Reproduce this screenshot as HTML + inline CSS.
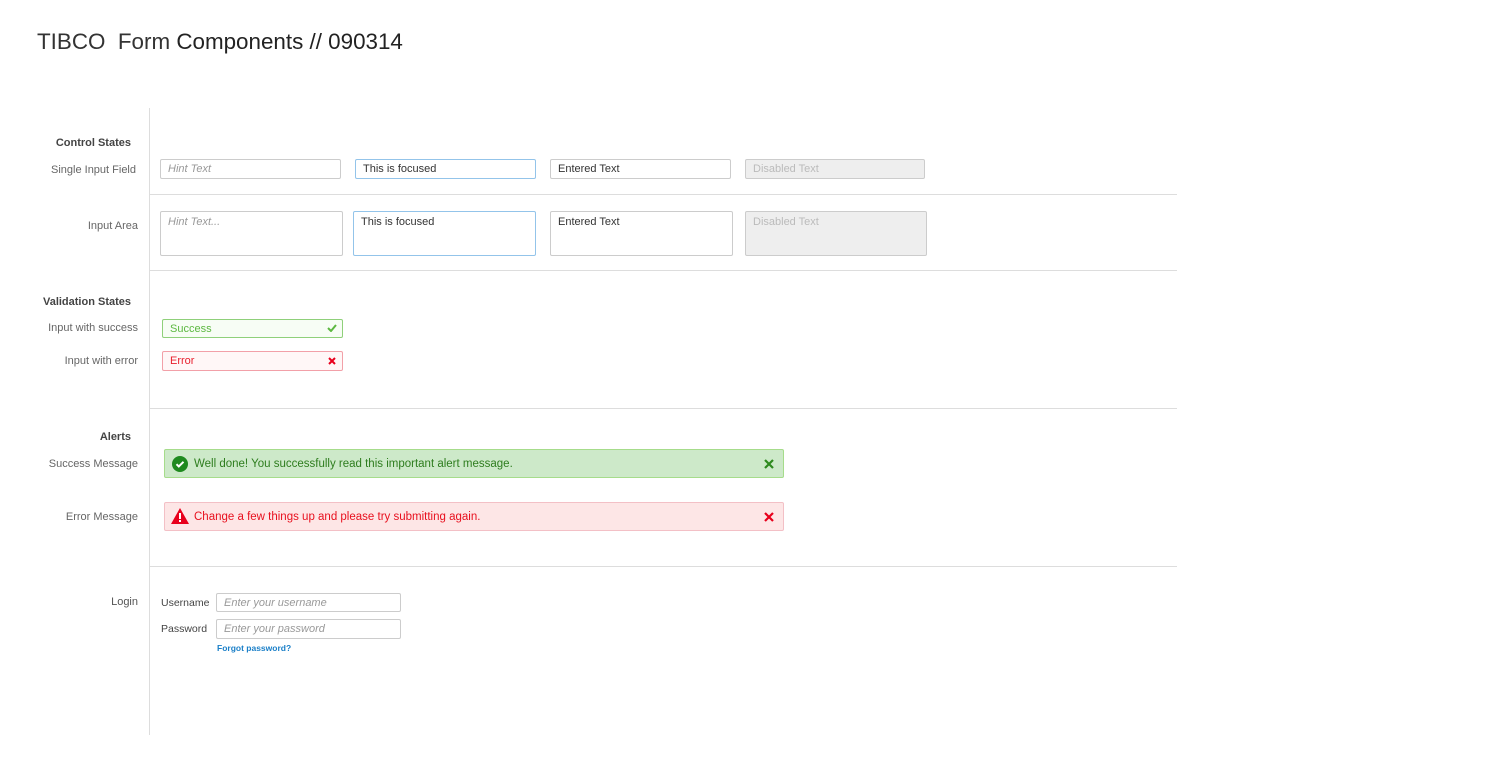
<!DOCTYPE html>
<html><head><meta charset="utf-8"><style>
body{margin:0;width:1500px;height:762px;background:#fff;position:relative;font-family:"Liberation Sans",sans-serif;overflow:hidden}
.a{position:absolute}
.t{position:absolute;font-size:22.4px;color:#222;left:37px;top:29px;white-space:nowrap}
.lbl{position:absolute;right:1362px;font-size:11px;color:#666;white-space:nowrap;text-align:right}
.h{position:absolute;right:1369px;font-size:11px;color:#444;font-weight:bold;white-space:nowrap}
.in{position:absolute;box-sizing:border-box;border:1px solid #ccc;border-radius:2px;background:#fff;color:#333;padding:2px 7px;line-height:15px;white-space:nowrap;font-family:"Liberation Sans",sans-serif;font-size:11px}
.hint{color:#999;font-style:italic}
.dis{background:#eee;color:#bbb;border-color:#ccc}
.sep{position:absolute;left:149px;width:1028px;height:1px;background:#ddd}
.al{position:absolute;left:164px;width:620px;height:29px;box-sizing:border-box;border-radius:2px;font-family:"Liberation Sans",sans-serif;font-size:11.5px;line-height:29px;padding-left:29px}
</style></head><body>
<div class="t"><span style="color:#333">TIBCO&nbsp; Form</span> Components // 090314</div>
<div class="a" style="left:149px;top:108px;width:1px;height:627px;background:#ddd"></div>
<div class="sep" style="top:194px"></div>
<div class="sep" style="top:270px"></div>
<div class="sep" style="top:408px"></div>
<div class="sep" style="top:566px"></div>

<div class="h" style="top:137px">Control States</div>
<div class="lbl" style="top:164px;right:1364px">Single Input Field</div>
<div class="in hint" style="left:160px;top:159px;width:181px;height:20px">Hint Text</div>
<div class="in" style="left:355px;top:159px;width:181px;height:20px;border-color:#93c4ea">This is focused</div>
<div class="in" style="left:550px;top:159px;width:181px;height:20px">Entered Text</div>
<div class="in dis" style="left:745px;top:159px;width:180px;height:20px">Disabled Text</div>

<div class="lbl" style="top:220px">Input Area</div>
<div class="in hint" style="left:160px;top:211px;width:183px;height:45px;padding-top:3px">Hint Text...</div>
<div class="in" style="left:353px;top:211px;width:183px;height:45px;padding-top:3px;border-color:#93c4ea">This is focused</div>
<div class="in" style="left:550px;top:211px;width:183px;height:45px;padding-top:3px">Entered Text</div>
<div class="in dis" style="left:745px;top:211px;width:182px;height:45px;padding-top:3px">Disabled Text</div>

<div class="h" style="top:296px;right:1369px">Validation States</div>
<div class="lbl" style="top:322px">Input with success</div>
<div class="in" style="left:162px;top:319px;width:181px;height:19px;border-color:#8fd07a;background:#f7fdf5;color:#5cb840;line-height:14px">Success<svg class="a" style="right:5px;top:4px" width="10" height="8" viewBox="0 0 10 8"><path d="M1 4l3 3 5-6" stroke="#5cb840" stroke-width="2" fill="none"/></svg></div>
<div class="lbl" style="top:355px">Input with error</div>
<div class="in" style="left:162px;top:351px;width:181px;height:20px;border-color:#f2a0a8;background:#fff7f7;color:#e8202e">Error<svg class="a" style="right:6px;top:5px" width="8" height="8" viewBox="0 0 8 8"><path d="M1 1l6 6M7 1l-6 6" stroke="#e8001c" stroke-width="2"/></svg></div>

<div class="h" style="top:431px">Alerts</div>
<div class="lbl" style="top:458px">Success Message</div>
<div class="al" style="top:449px;background:#cde9c9;border:1px solid #a6dc8b;color:#2e7d1e">
<svg class="a" style="left:7px;top:6px" width="16" height="16" viewBox="0 0 16 16"><circle cx="8" cy="8" r="8" fill="#1e8a1e"/><path d="M4.5 8.2l2.3 2.3 4.7-4.7" stroke="#fff" stroke-width="2" fill="none"/></svg>
Well done! You successfully read this important alert message.
<svg class="a" style="right:9px;top:9px" width="10" height="10" viewBox="0 0 10 10"><path d="M1 1l8 8M9 1l-8 8" stroke="#2e8a1e" stroke-width="2.2"/></svg></div>
<div class="lbl" style="top:511px">Error Message</div>
<div class="al" style="top:502px;background:#fde6e6;border:1px solid #f3c0c6;color:#e8101e">
<svg class="a" style="left:6px;top:5px" width="18" height="16" viewBox="0 0 18 16"><path d="M9 0L18 16H0z" fill="#e8001c"/><rect x="8" y="5" width="2" height="6" fill="#fff"/><rect x="8" y="12" width="2" height="2" fill="#fff"/></svg>
Change a few things up and please try submitting again.
<svg class="a" style="right:9px;top:9px" width="10" height="10" viewBox="0 0 10 10"><path d="M1 1l8 8M9 1l-8 8" stroke="#e8001c" stroke-width="2.2"/></svg></div>

<div class="lbl" style="top:596px;font-size:11px;color:#555">Login</div>
<div class="a" style="left:161px;top:597px;font-size:10.5px;color:#444">Username</div>
<div class="in hint" style="left:216px;top:593px;width:185px;height:19px;line-height:14px">Enter your username</div>
<div class="a" style="left:161px;top:623px;font-size:10.5px;color:#444">Password</div>
<div class="in hint" style="left:216px;top:619px;width:185px;height:20px">Enter your password</div>
<div class="a" style="left:217px;top:643px;font-size:8.5px;color:#1a7fc8;font-weight:bold">Forgot password?</div>
</body></html>
